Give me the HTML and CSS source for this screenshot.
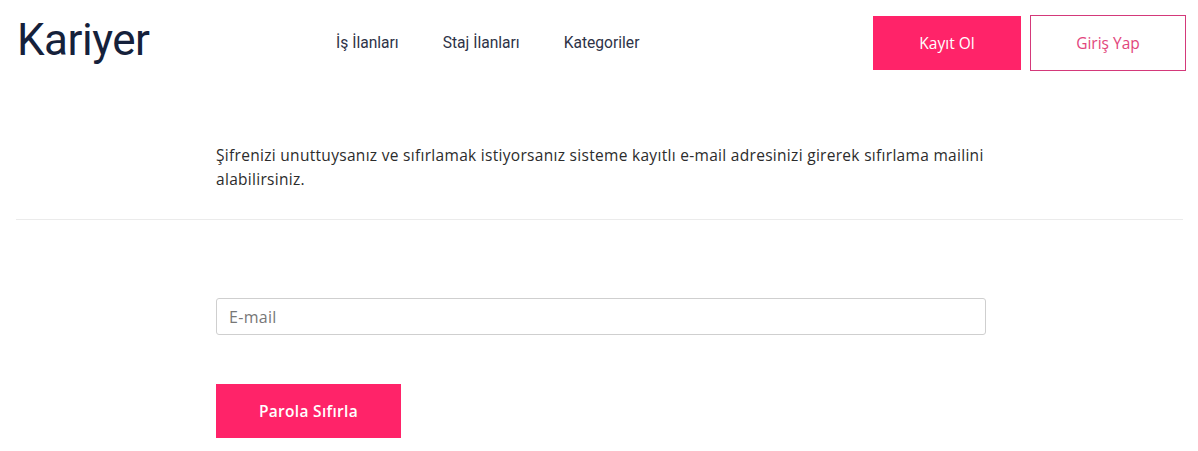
FILE: index.html
```html
<!DOCTYPE html>
<html lang="tr">
<head>
<meta charset="utf-8">
<title>Kariyer - Şifre Sıfırlama</title>
<link rel="stylesheet" href="styles.css">
</head>
<body>
<header class="header">
  <a class="logo" href="#">Kariyer</a>
  <nav class="nav">
    <a href="#">İş İlanları</a>
    <a href="#">Staj İlanları</a>
    <a href="#">Kategoriler</a>
  </nav>
  <div class="actions">
    <a class="btn btn-fill" href="#">Kayıt Ol</a>
    <a class="btn btn-outline" href="#">Giriş Yap</a>
  </div>
</header>
<main class="main">
  <section class="intro">
    <p class="content">Şifrenizi unuttuysanız ve sıfırlamak istiyorsanız sisteme kayıtlı e-mail adresinizi girerek sıfırlama mailini alabilirsiniz.</p>
  </section>
  <form class="form content">
    <input class="input" type="email" placeholder="E-mail">
    <button class="btn btn-fill btn-submit" type="button">Parola Sıfırla</button>
  </form>
</main>
</body>
</html>
```
FILE: styles.css
```css
* { box-sizing: border-box; }
html, body { margin: 0; padding: 0; background: #fff; }
body { font-family: "Open Sans", "Lato", sans-serif; color: #333; }
a { text-decoration: none; }

.header {
  display: flex;
  align-items: center;
  padding: 15px 12px 0 17px;
  height: 71px;
}
.logo {
  font-family: "Roboto", sans-serif;
  font-size: 44px;
  font-weight: 400;
  color: #15213b;
  letter-spacing: -0.5px;
  width: 319px;
  line-height: 1;
  margin-top: -6px;
}
.nav {
  display: flex;
  gap: 44px;
  flex: 1;
}
.nav a {
  font-family: "Roboto", sans-serif;
  font-size: 15.6px;
  color: #2e3347;
}
.actions { display: flex; gap: 9px; align-items: center; }
.btn {
  display: flex;
  align-items: center;
  justify-content: center;
  font-family: "Open Sans", sans-serif;
  font-size: 15.5px;
  border: 0;
}
.btn-fill {
  background: #ff2369;
  color: #fff;
  width: 148px;
  height: 54px;
  font-weight: 500;
}
.btn-outline {
  width: 156px;
  height: 56px;
  border: 1px solid #d4397a;
  color: #e2457c;
  background: #fff;
}
.main { padding: 0 15px 0 16px; }
.intro {
  border-bottom: 1px solid #ebebeb;
  padding: 72px 0 28px 200px;
}
.content { width: 770px; }
.intro p {
  margin: 0;
  font-size: 15.5px;
  line-height: 24px;
  color: #2c2c2c;
  letter-spacing: 0.3px;
}
.form {
  margin-left: 200px;
  padding-top: 78px;
  display: flex;
  flex-direction: column;
  align-items: flex-start;
}
.input {
  width: 770px;
  height: 37px;
  border: 1px solid #cfcfcf;
  border-radius: 3px;
  padding: 0 12px;
  font-family: "Open Sans", sans-serif;
  font-size: 16px;
  letter-spacing: 0.3px;
  color: #333;
}
.input::placeholder { color: #777; }
.btn-submit {
  margin-top: 49px;
  width: 185px;
  height: 54px;
  font-weight: 600;
  font-size: 15.5px;
  letter-spacing: 0.3px;
}
```
